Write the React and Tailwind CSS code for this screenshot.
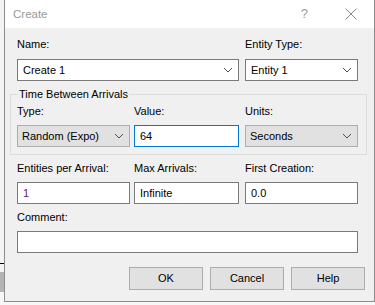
const font = { fontFamily: '"Liberation Sans", Arial, sans-serif' };

function Chevron() {
  return (
    <svg width="10" height="6" viewBox="0 0 10 6" className="shrink-0">
      <polyline points="1,1 5,5 9,1" fill="none" stroke="#4d4d4d" strokeWidth="1" />
    </svg>
  );
}

function Label({ children }) {
  return <div className="h-[16px] leading-[16px] text-[11px] text-black whitespace-nowrap">{children}</div>;
}

function Combo({ value, gray, className = "" }) {
  return (
    <div
      className={`flex items-center justify-between h-[22px] border pr-[5px] text-[11px] ${
        gray ? "bg-[#e1e1e1] border-[#adadad] pl-[4px]" : "bg-white border-[#7a7a7a] pl-[5px]"
      } ${className}`}
    >
      <span className="leading-[16px] text-black">{value}</span>
      <Chevron />
    </div>
  );
}

function Field({ value, color = "text-black", blue, className = "" }) {
  return (
    <div
      className={`flex items-center h-[22px] border bg-white pl-[5px] text-[11px] ${
        blue ? "border-[#0078d7]" : "border-[#7a7a7a]"
      } ${className}`}
    >
      <span className={`leading-[16px] ${color}`}>{value}</span>
    </div>
  );
}

function Button({ children }) {
  return (
    <div className="w-[74px] h-[23px] flex items-center justify-center bg-[#e1e1e1] border border-[#adadad] text-[11px] text-black">
      {children}
    </div>
  );
}

export default function App() {
  return (
    <div className="w-[375px] h-[305px] bg-[#f7f7f7] overflow-hidden flex" style={font}>
      <div className="w-[4px] shrink-0 flex flex-col">
        <div className="h-[263px] bg-[#f4f4f4]" />
        <div className="h-[1px] bg-black" />
        <div className="h-[8px] bg-[#f4f4f4]" />
        <div className="h-[20px] bg-[#b4b4b4]" />
      </div>
      <div className="w-[371px] h-[302px] shrink-0 border-l border-r border-b border-[#8c8c8c] bg-[#f0f0f0] flex flex-col">
        <div className="h-[28px] bg-white flex items-center pl-[8px] pr-[17px] shrink-0">
          <span className="text-[11.5px] text-[#999999] leading-[16px]">Create</span>
          <span className="ml-auto text-[13px] text-[#9a9a9a] leading-[16px] mr-[37px]">?</span>
          <svg width="12" height="12" viewBox="0 0 12 12">
            <path d="M0.5 0.5 L11.5 11.5 M11.5 0.5 L0.5 11.5" stroke="#8a8a8a" strokeWidth="1" />
          </svg>
        </div>
        <div className="flex flex-col pl-[12px] pt-[8px]">
          <div className="grid grid-cols-[228px_113px]">
            <Label>Name:</Label>
            <Label>Entity Type:</Label>
            <Combo value="Create 1" className="mt-[7px] h-[21px] w-[222px]" />
            <Combo value="Entity 1" className="mt-[7px] h-[21px] w-[113px]" />
          </div>
          <div className="mt-[13px] -ml-[7px] w-[357px] border border-[#dcdcdc] pl-[6px] pb-[7px]">
            <div className="-mt-[9px] h-[16px] flex">
              <span className="ml-[1px] px-[1px] bg-[#f0f0f0] text-[11px] leading-[16px] text-black">
                Time Between Arrivals
              </span>
            </div>
            <div className="grid grid-cols-[117px_111px_113px] mt-[1px]">
              <Label>Type:</Label>
              <Label>Value:</Label>
              <Label>Units:</Label>
              <Combo value="Random (Expo)" gray className="mt-[6px] w-[113px]" />
              <Field value="64" blue className="mt-[6px] w-[105px]" />
              <Combo value="Seconds" gray className="mt-[6px] w-[113px]" />
            </div>
          </div>
          <div className="grid grid-cols-[117px_111px_113px] mt-[5px]">
            <Label>Entities per Arrival:</Label>
            <Label>Max Arrivals:</Label>
            <Label>First Creation:</Label>
            <Field value="1" color="text-[#6b1660]" className="mt-[6px] w-[113px]" />
            <Field value="Infinite" className="mt-[6px] w-[105px]" />
            <Field value="0.0" className="mt-[6px] w-[113px]" />
          </div>
          <div className="mt-[5px]">
            <Label>Comment:</Label>
          </div>
          <Field value="" className="mt-[6px] w-[341px]" />
          <div className="flex gap-[7px] mt-[14px] ml-[112px]">
            <Button>OK</Button>
            <Button>Cancel</Button>
            <Button>Help</Button>
          </div>
        </div>
      </div>
    </div>
  );
}
